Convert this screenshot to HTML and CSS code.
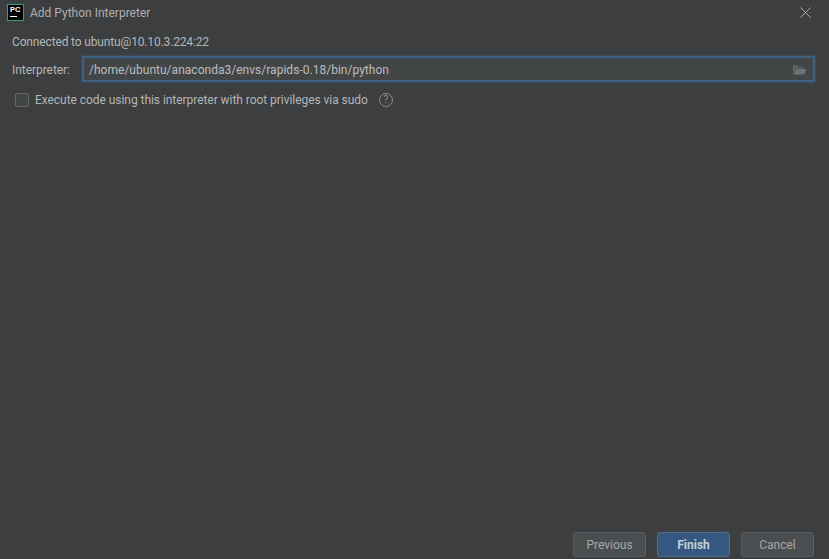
FILE: index.html
```html
<!DOCTYPE html>
<html lang="en">
<head>
<meta charset="utf-8">
<title>Add Python Interpreter</title>
<link rel="stylesheet" href="styles.css">
</head>
<body>
<div class="dialog">
  <header class="titlebar">
    <div class="logo"><span class="logo-text">PC</span><span class="logo-bar"></span></div>
    <span class="title">Add Python Interpreter</span>
    <svg class="close" width="11" height="11" viewBox="0 0 11 11"><path d="M0.5 0.5L10.5 10.5M10.5 0.5L0.5 10.5" stroke="#a8aaab" stroke-width="1" fill="none"/></svg>
  </header>
  <main class="content">
    <div class="connected">Connected to ubuntu@10.10.3.224:22</div>
    <div class="field-row">
      <label class="label">Interpreter:</label>
      <div class="input">
        <span class="path">/home/ubuntu/anaconda3/envs/rapids-0.18/bin/python</span>
        <svg class="folder" width="15" height="11" viewBox="0 0 15 11"><path d="M1 10V1.500h4.500l1 1.500H12v1.500H4L1 10z" fill="#5f6365"/><path d="M4.200 5h10.300l-2.300 5.500H1.500z" fill="#6f7274"/></svg>
      </div>
    </div>
    <div class="check-row">
      <span class="checkbox"></span>
      <span class="check-label">Execute code using this interpreter with root privileges via sudo</span>
      <span class="help">?</span>
    </div>
  </main>
  <footer class="buttons">
    <button class="btn">Previous</button>
    <button class="btn primary">Finish</button>
    <button class="btn">Cancel</button>
  </footer>
</div>
</body>
</html>
```
FILE: styles.css
```css
* { box-sizing: border-box; }
html, body { margin: 0; height: 100%; }
body {
  background: #3c3e3f;
  color: #b4b6b7;
  font-family: Roboto, "Open Sans", sans-serif;
  font-size: 12px;
  overflow: hidden;
}
.dialog { display: flex; flex-direction: column; width: 829px; height: 559px; }
.titlebar { display: flex; align-items: center; height: 25px; padding: 0 18px 0 7px; flex: none; }
.logo {
  width: 17px; height: 17px; background: #000; border: 1px solid #2f9e83;
  display: flex; flex-direction: column; padding: 1px 2px; color: #fff; margin-right: 6px;
}
.logo-text { font: bold 7.5px/8px "Liberation Sans", sans-serif; }
.logo-bar { width: 7px; height: 1px; background: #fff; margin-top: 2px; }
.title { flex: 1; color: #aeb0b1; }
.content { flex: 1; padding: 9px 14px 0 12px; }
.connected { height: 16px; line-height: 16px; letter-spacing: -0.15px; }
.field-row { display: flex; align-items: center; margin-top: 6px; height: 26px; }
.label { width: 70px; flex: none; padding-top: 1px; letter-spacing: -0.05px; }
.input {
  flex: 1; height: 26px; display: flex; align-items: center; justify-content: space-between;
  background: #434647; border: 2px solid #3d6185; padding: 0 6px 0 5px; color: #bbbcbd; outline: 1px solid #3a4955;
}
.path { padding-top: 2px; letter-spacing: 0.02px; }
.check-row { display: flex; align-items: center; margin-top: 4px; height: 28px; padding-left: 3px; }
.checkbox { width: 14px; height: 14px; border: 1px solid #666869; border-radius: 2px; background: #434647; margin-right: 6px; }
.check-label { letter-spacing: -0.05px; }
.help {
  width: 14px; height: 14px; border-radius: 50%; border: 1px solid #8b8d8e; margin-left: 11px;
  display: flex; align-items: center; justify-content: center; font-size: 10px; line-height: 1; color: #8b8d8e;
}
.buttons { display: flex; justify-content: flex-end; gap: 11px; padding: 0 15px 2px 0; flex: none; }
.btn {
  width: 73px; height: 25px; background: #4a4e50; border: 1px solid #5a5e60; border-radius: 3px;
  color: #a5a7a8; font: 12px Roboto, "Open Sans", sans-serif; padding: 0;
}
.btn.primary { background: #365880; border-color: #4c708c; color: #c5cfd8; font-weight: 700; }
```
